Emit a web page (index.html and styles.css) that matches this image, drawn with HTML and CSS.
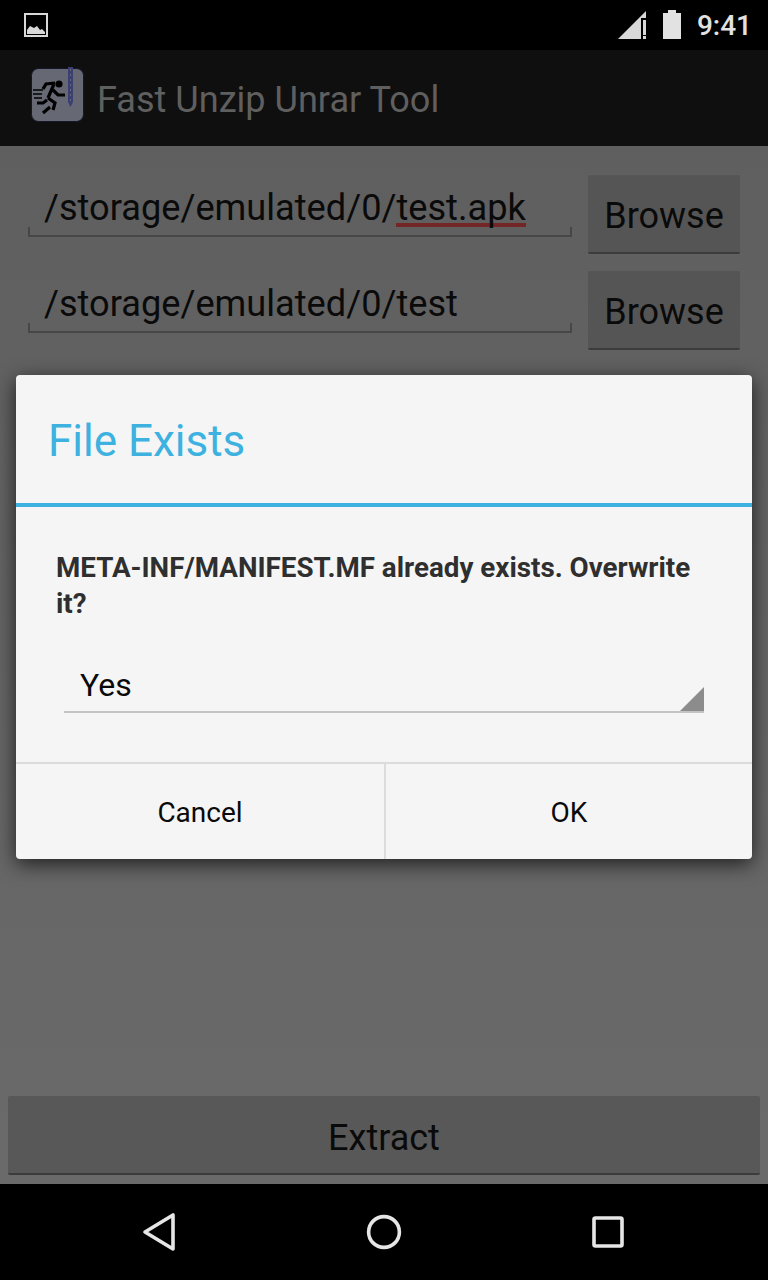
FILE: index.html
```html
<!DOCTYPE html>
<html lang="en">
<head>
  <meta charset="UTF-8" />
  <title>Fast Unzip Unrar Tool</title>
  <link rel="stylesheet" href="styles.css">
</head>
<body>
  <div class="screen">
    <div class="status-bar">
      <svg class="status-picture" width="26" height="24" viewBox="0 0 26 24">
        <rect x="1" y="1" width="22" height="22" fill="none" stroke="#d8d8d8" stroke-width="2"/>
        <path d="M3 21v-4l3-4 2 1 2 1 3-2 3 4 2-1 3 3v2z" fill="#d8d8d8"/>
      </svg>
      <div class="status-right">
        <svg width="30" height="30" viewBox="0 0 30 30">
          <path d="M1 29 29 1v7h-5v21z" fill="#d8d8d8"/>
          <path d="M26 10h3v15h-3zM26 26h3v3h-3z" fill="#d8d8d8"/>
        </svg>
        <svg class="status-battery" width="20" height="30" viewBox="0 0 20 30">
          <path d="M6 0h8v3h5v26H1V3h5z" fill="#e2e2e2"/>
        </svg>
        <span class="status-time">9:41</span>
      </div>
    </div>

    <div class="app-bar">
      <svg class="app-icon" width="56" height="58" viewBox="0 0 56 58">
        <rect x="2.5" y="2.5" width="52" height="53" rx="7" fill="#666874" stroke="#14162c" stroke-width="1"/>
        <path d="M39 1h5v35l-2.5 5-2.500-5z" fill="#3b3f72"/>
        <path d="M41.500 3v33" fill="none" stroke="#666874" stroke-width="1" stroke-dasharray="2 3"/>
        <circle cx="30" cy="18" r="3.600" fill="#000"/>
        <path d="M26 17l-9 1-3 5M25 18l-6 14M24 24l5 5h7M19 32l7 5-2 7M18 34l-4 3H8" fill="none" stroke="#000" stroke-width="3.200"/>
        <path d="M21 41l-7 6" fill="none" stroke="#000" stroke-width="3.200"/>
        <path d="M4 24h10M4 28h9M5 32h8" fill="none" stroke="#000" stroke-width="1.500"/>
      </svg>
      <span class="app-title">Fast Unzip Unrar Tool</span>
    </div>

    <div class="content">
      <div class="file-row">
        <div class="path-field">
          <span class="path-text">/storage/emulated/0/<span class="misspelled">test.apk</span></span>
        </div>
        <button class="btn browse-btn" type="button">Browse</button>
      </div>
      <div class="file-row">
        <div class="path-field">
          <span class="path-text">/storage/emulated/0/test</span>
        </div>
        <button class="btn browse-btn" type="button">Browse</button>
      </div>
      <div class="spacer"></div>
      <button class="btn extract-btn" type="button">Extract</button>
    </div>

    <div class="nav-bar">
      <svg width="40" height="40" viewBox="0 0 40 40">
        <path d="M33 3v34L5 20z" fill="none" stroke="#e6e6e6" stroke-width="3.600" stroke-linejoin="round"/>
      </svg>
      <svg width="40" height="40" viewBox="0 0 40 40">
        <circle cx="20" cy="20" r="15.400" fill="none" stroke="#e6e6e6" stroke-width="3.600"/>
      </svg>
      <svg width="40" height="40" viewBox="0 0 40 40">
        <rect x="6" y="6" width="28" height="28" rx="1.500" fill="none" stroke="#e6e6e6" stroke-width="3.600"/>
      </svg>
    </div>

    <div class="dialog">
      <div class="dialog-title">File Exists</div>
      <div class="dialog-body">
        <p class="dialog-message">META-INF/MANIFEST.MF already exists. Overwrite it?</p>
        <div class="spinner">
          <span>Yes</span>
          <div class="spinner-arrow"></div>
        </div>
      </div>
      <div class="dialog-buttons">
        <button class="dialog-btn" type="button">Cancel</button>
        <button class="dialog-btn" type="button">OK</button>
      </div>
    </div>
  </div>
</body>
</html>
```

FILE: styles.css
```css
* {
  box-sizing: border-box;
}
body {
  margin: 0;
  font-family: Roboto, sans-serif;
  background-color: #000;
}
button {
  font-family: inherit;
  border: none;
  padding: 0;
}
.screen {
  position: relative;
  width: 768px;
  height: 1280px;
  display: flex;
  flex-direction: column;
  overflow: hidden;
}

.status-bar {
  height: 50px;
  background: #000;
  display: flex;
  align-items: center;
  justify-content: space-between;
  padding: 0 16px 0 24px;
}
.status-right {
  display: flex;
  align-items: center;
}
.status-battery {
  margin-left: 15px;
}
.status-time {
  margin-left: 15px;
  color: #e2e2e2;
  font-size: 28px;
  font-weight: 500;
}

.app-bar {
  height: 96px;
  background: #0f0f0f;
  display: flex;
  align-items: center;
  padding-left: 29px;
}
.app-icon {
  margin-bottom: 6px;
}
.app-title {
  margin: 4px 0 0 12px;
  color: #5f5f5f;
  font-size: 36.1px;
}

.content {
  flex: 1;
  display: flex;
  flex-direction: column;
  padding: 29px 8px 9px;
  background: linear-gradient(#5f5f5f, #6a6a6a);
}
.file-row {
  display: flex;
  height: 79px;
  margin-bottom: 17px;
  padding: 0 20px;
}
.path-field {
  width: 544px;
  height: 62px;
  padding: 12px 0 0 16px;
  border-bottom: 2px solid #474747;
  position: relative;
}
.path-field::before,
.path-field::after {
  content: "";
  position: absolute;
  bottom: 0;
  width: 2px;
  height: 8px;
  background: #474747;
}
.path-field::before {
  left: 0;
}
.path-field::after {
  right: 0;
}
.path-text {
  color: #0a0a0a;
  font-size: 36.2px;
  line-height: 42px;
}
.misspelled {
  display: inline-block;
  line-height: 30px;
  border-bottom: 4px solid #742626;
}
.btn {
  background: #555;
  color: #0a0a0a;
  border-bottom: 2px solid #3c3c3c;
  border-radius: 2px;
}
.browse-btn {
  margin-left: 16px;
  width: 152px;
  height: 79px;
  padding-top: 4px;
  font-size: 36px;
}
.spacer {
  flex: 1;
}
.extract-btn {
  width: 752px;
  height: 79px;
  padding-top: 6px;
  background: #585858;
  font-size: 36px;
}

.nav-bar {
  height: 96px;
  background: #000;
  display: grid;
  grid-template-columns: repeat(3, 224px);
  justify-content: center;
  justify-items: center;
  align-items: center;
}

.dialog {
  position: absolute;
  left: 16px;
  top: 375px;
  width: 736px;
  height: 484px;
  background: #f5f5f5;
  border-radius: 4px;
  box-shadow: 0 5px 20px rgba(0, 0, 0, 0.7);
  display: flex;
  flex-direction: column;
}
.dialog-title {
  height: 132px;
  padding-left: 32px;
  border-bottom: 4px solid #3db2e0;
  color: #3db2e0;
  font-size: 44px;
  line-height: 132px;
}
.dialog-body {
  flex: 1;
  padding: 43px 48px 0 40px;
}
.dialog-message {
  margin: 0;
  color: #2f2f2f;
  font-size: 27.75px;
  font-weight: 700;
  line-height: 36px;
}
.spinner {
  position: relative;
  margin: 29px 0 0 8px;
  height: 62px;
  padding: 15px 0 0 16px;
  width: 640px;
  border-bottom: 2px solid #c4c4c4;
  color: #0a0a0a;
  font-size: 32px;
}
.spinner-arrow {
  position: absolute;
  right: 0;
  bottom: 0;
  width: 24px;
  height: 24px;
  background: #8c8c8c;
  clip-path: polygon(100% 0, 100% 100%, 0 100%);
}
.dialog-buttons {
  height: 97px;
  display: grid;
  grid-template-columns: 370px 1fr;
  border-top: 2px solid #dcdcdc;
}
.dialog-btn {
  padding-top: 2px;
  background: transparent;
  color: #0a0a0a;
  font-size: 28px;
}
.dialog-btn:first-child {
  border-right: 2px solid #dcdcdc;
}
```
